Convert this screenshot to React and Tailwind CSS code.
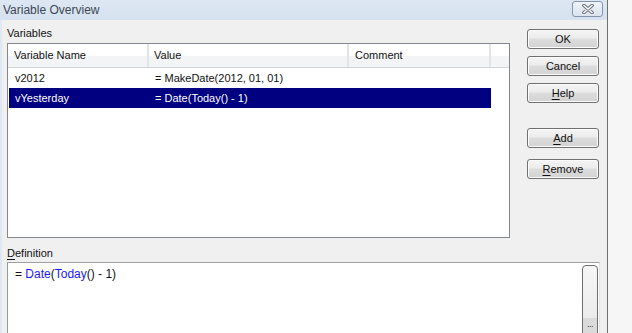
import React from "react";

const btn =
  "flex h-[20px] w-[72px] items-center justify-center rounded-[3px] border border-[#707070] bg-[linear-gradient(180deg,#f4f4f4_0%,#ececec_45%,#dddddd_50%,#d2d2d2_100%)] text-[11px] leading-none text-[#111] shadow-[inset_0_0_0_1px_#fcfcfc]";

function Btn({ children }) {
  return <div className={btn}>{children}</div>;
}

export default function App() {
  return (
    <div className="flex h-[333px] w-[632px] overflow-hidden bg-[#f6f6f6] font-['Liberation_Sans',Arial,sans-serif] text-[11px] text-[#111]">
      {/* window */}
      <div className="flex w-[608px] flex-col border-r border-[#6f6f6f] bg-[#dfe8f2]">
        {/* title bar */}
        <div className="flex h-[20px] shrink-0 items-start justify-between bg-[linear-gradient(180deg,#dde7f3_0%,#d6e2ef_100%)] pl-[3px] pr-[4px]">
          <div className="pt-[3px] text-[12px] leading-[14px] text-[#3d4856]">Variable Overview</div>
          <div className="mt-[1px] flex h-[16px] w-[31px] items-center justify-center rounded-[3px] border border-[#8595aa] bg-[linear-gradient(180deg,#eef3f9_0%,#dbe4ef_100%)]">
            <svg width="14" height="10" viewBox="0 0 14 10">
              <path d="M3 1.5 L11 8.5 M11 1.5 L3 8.5" stroke="#6a6f78" strokeWidth="3.6" strokeLinecap="round" />
              <path d="M3 1.5 L11 8.5 M11 1.5 L3 8.5" stroke="#ffffff" strokeWidth="1.6" strokeLinecap="round" />
            </svg>
          </div>
        </div>
        {/* body */}
        <div className="ml-[2px] flex flex-1 flex-col bg-[#f0f0f0] pl-[5px]">
          <div className="flex pt-[6px]">
            <div className="flex w-[503px] flex-col">
              <div className="h-[14px] leading-[14px]">Variables</div>
              <div className="mt-[3px] flex h-[195px] flex-col border border-[#828790] bg-white">
                {/* header */}
                <div className="flex h-[24px] shrink-0 border-b border-[#d5d5d5] bg-[linear-gradient(180deg,#ffffff_0%,#ffffff_50%,#f3f4f5_51%,#f3f4f5_100%)]">
                  <div className="flex w-[141px] items-center border-r-2 border-[#e3e4e6] pl-[6px]">Variable Name</div>
                  <div className="flex w-[200px] items-center border-r-2 border-[#e3e4e6] pl-[5px]">Value</div>
                  <div className="flex w-[142px] items-center border-r-2 border-[#e3e4e6] pl-[6px]">Comment</div>
                  <div className="flex-1" />
                </div>
                {/* rows */}
                <div className="flex h-[20px] pl-[1px]">
                  <div className="flex w-[140px] items-center pl-[6px]">v2012</div>
                  <div className="flex w-[200px] items-center pl-[6px]">= MakeDate(2012, 01, 01)</div>
                </div>
                <div className="flex h-[20px] pl-[1px]">
                  <div className="flex w-[482px] bg-[#000080] text-white">
                    <div className="flex w-[140px] items-center pl-[6px]">vYesterday</div>
                    <div className="flex w-[200px] items-center pl-[6px]">= Date(Today() - 1)</div>
                  </div>
                </div>
              </div>
            </div>
            <div className="ml-[17px] mt-[3px] flex w-[72px] flex-col">
              <Btn>OK</Btn>
              <div className="mt-[7px]">
                <Btn>Cancel</Btn>
              </div>
              <div className="mt-[7px]">
                <Btn>
                  <span className="underline underline-offset-2">H</span>elp
                </Btn>
              </div>
              <div className="mt-[25px]">
                <Btn>
                  <span className="underline underline-offset-2">A</span>dd
                </Btn>
              </div>
              <div className="mt-[11px]">
                <Btn>
                  <span className="underline underline-offset-2">R</span>emove
                </Btn>
              </div>
            </div>
          </div>
          <div className="mt-[8px] h-[14px] leading-[14px]">
            <span className="underline underline-offset-2">D</span>efinition
          </div>
          <div className="mt-[2px] flex h-[80px] w-[593px] shrink-0 border-l border-r border-t border-l-[#9a9a9a] border-r-[#e3e3e3] border-t-[#a0a0a0] bg-white">
            <div className="flex-1 pl-[7px] pt-[3px] text-[12px] leading-[16px] text-[#111]">
              = <span className="text-[#1a1aff]">Date</span>(<span className="text-[#1a1aff]">Today</span>() - 1)
            </div>
            <div className="mr-[1px] mt-[2px] flex h-[80px] w-[16px] flex-col overflow-hidden rounded-t-[4px] border border-[#6e6e6e] bg-[linear-gradient(180deg,#f6f6f6_0%,#e6e6e6_100%)]">
              <div className="h-[52px] shrink-0" />
              <div className="flex h-[28px] justify-center bg-[#dadada] pt-[1px] text-[9px] leading-[10px] tracking-[-0.5px] text-[#333]">
                ...
              </div>
            </div>
          </div>
        </div>
      </div>
      <div className="flex-1" />
    </div>
  );
}
